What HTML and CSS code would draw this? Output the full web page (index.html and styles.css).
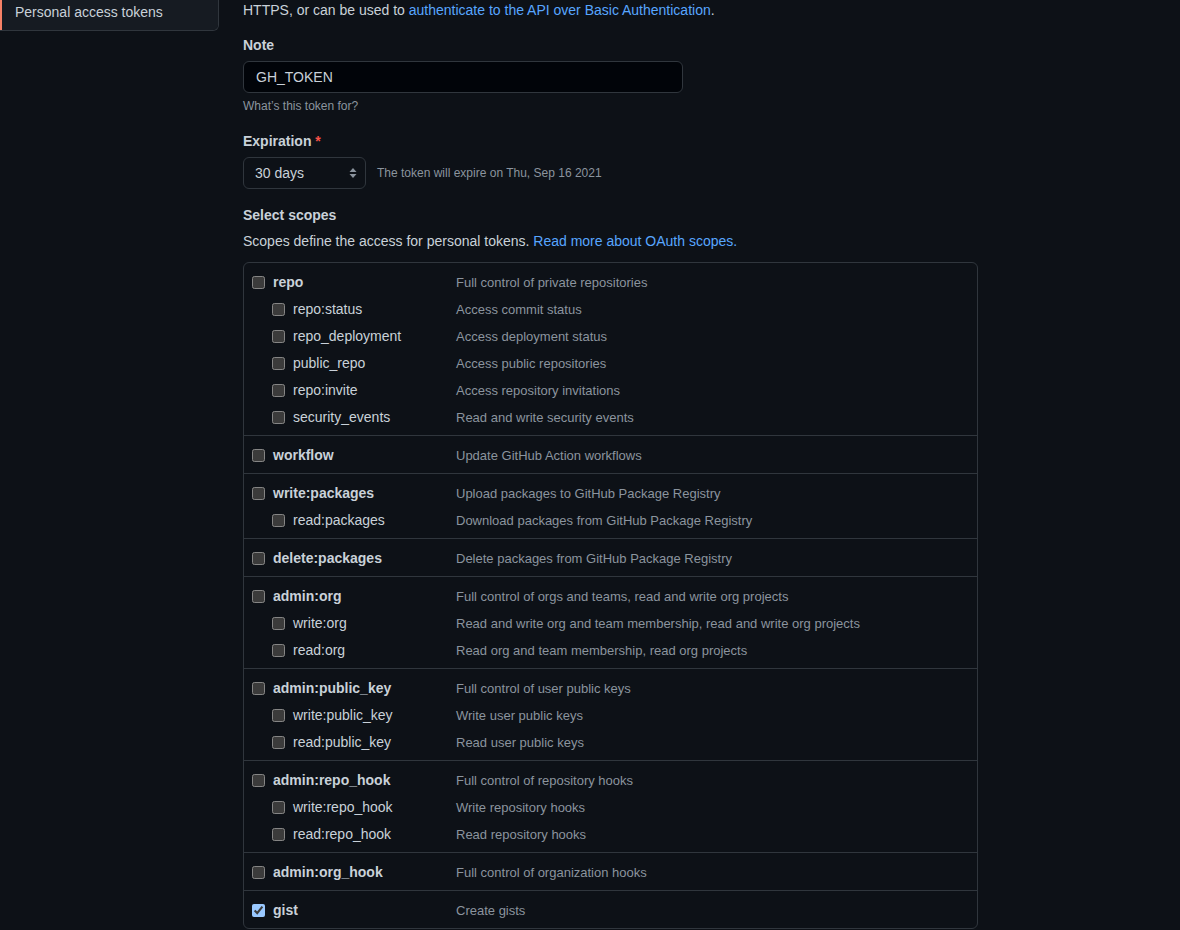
FILE: index.html
```html
<!DOCTYPE html>
<html lang="en">
<head>
    <meta charset="UTF-8">
    <meta name="viewport" content="width=device-width, initial-scale=1.0">
    <title>New personal access token</title>
    <link rel="stylesheet" href="styles.css">
</head>
<body>

    <div class="layout">
        <div class="sidebar">
            <nav class="side-nav">
                <a class="side-nav-item selected" href="#">Personal access tokens</a>
            </nav>
        </div>

        <div class="main">
            <p class="intro">
                HTTPS, or can be used to <a href="#">authenticate to the API over Basic Authentication</a>.
            </p>

            <div class="form-group">
                <label class="form-label" for="note">Note</label>
                <input class="form-input" id="note" type="text" value="GH_TOKEN">
                <p class="note">What’s this token for?</p>
            </div>

            <div class="form-group">
                <label class="form-label" for="expiration">Expiration <span class="required">*</span></label>
                <div class="expiration-row">
                    <div class="select-wrap">
                        <select class="form-select" id="expiration">
                            <option>30 days</option>
                            <option>60 days</option>
                            <option>90 days</option>
                            <option>Custom...</option>
                            <option>No expiration</option>
                        </select>
                        <svg class="select-arrows" width="8" height="12" viewBox="0 0 8 12">
                            <path d="M4 1 L7.5 5 H0.5 Z M4 11 L7.5 7 H0.5 Z" fill="#8b949e"/>
                        </svg>
                    </div>
                    <span class="expiration-text">The token will expire on Thu, Sep 16 2021</span>
                </div>
            </div>

            <div class="form-group">
                <div class="form-label">Select scopes</div>
                <p class="scopes-intro">Scopes define the access for personal tokens. <a href="#">Read more about OAuth scopes.</a></p>

                <div class="scopes">
                    <div class="scope-group">
                        <div class="scope-row parent">
                            <label class="scope-name"><input type="checkbox"> repo</label>
                            <span class="scope-desc">Full control of private repositories</span>
                        </div>
                        <div class="scope-row child">
                            <label class="scope-name"><input type="checkbox"> repo:status</label>
                            <span class="scope-desc">Access commit status</span>
                        </div>
                        <div class="scope-row child">
                            <label class="scope-name"><input type="checkbox"> repo_deployment</label>
                            <span class="scope-desc">Access deployment status</span>
                        </div>
                        <div class="scope-row child">
                            <label class="scope-name"><input type="checkbox"> public_repo</label>
                            <span class="scope-desc">Access public repositories</span>
                        </div>
                        <div class="scope-row child">
                            <label class="scope-name"><input type="checkbox"> repo:invite</label>
                            <span class="scope-desc">Access repository invitations</span>
                        </div>
                        <div class="scope-row child">
                            <label class="scope-name"><input type="checkbox"> security_events</label>
                            <span class="scope-desc">Read and write security events</span>
                        </div>
                    </div>

                    <div class="scope-group">
                        <div class="scope-row parent">
                            <label class="scope-name"><input type="checkbox"> workflow</label>
                            <span class="scope-desc">Update GitHub Action workflows</span>
                        </div>
                    </div>

                    <div class="scope-group">
                        <div class="scope-row parent">
                            <label class="scope-name"><input type="checkbox"> write:packages</label>
                            <span class="scope-desc">Upload packages to GitHub Package Registry</span>
                        </div>
                        <div class="scope-row child">
                            <label class="scope-name"><input type="checkbox"> read:packages</label>
                            <span class="scope-desc">Download packages from GitHub Package Registry</span>
                        </div>
                    </div>

                    <div class="scope-group">
                        <div class="scope-row parent">
                            <label class="scope-name"><input type="checkbox"> delete:packages</label>
                            <span class="scope-desc">Delete packages from GitHub Package Registry</span>
                        </div>
                    </div>

                    <div class="scope-group">
                        <div class="scope-row parent">
                            <label class="scope-name"><input type="checkbox"> admin:org</label>
                            <span class="scope-desc">Full control of orgs and teams, read and write org projects</span>
                        </div>
                        <div class="scope-row child">
                            <label class="scope-name"><input type="checkbox"> write:org</label>
                            <span class="scope-desc">Read and write org and team membership, read and write org projects</span>
                        </div>
                        <div class="scope-row child">
                            <label class="scope-name"><input type="checkbox"> read:org</label>
                            <span class="scope-desc">Read org and team membership, read org projects</span>
                        </div>
                    </div>

                    <div class="scope-group">
                        <div class="scope-row parent">
                            <label class="scope-name"><input type="checkbox"> admin:public_key</label>
                            <span class="scope-desc">Full control of user public keys</span>
                        </div>
                        <div class="scope-row child">
                            <label class="scope-name"><input type="checkbox"> write:public_key</label>
                            <span class="scope-desc">Write user public keys</span>
                        </div>
                        <div class="scope-row child">
                            <label class="scope-name"><input type="checkbox"> read:public_key</label>
                            <span class="scope-desc">Read user public keys</span>
                        </div>
                    </div>

                    <div class="scope-group">
                        <div class="scope-row parent">
                            <label class="scope-name"><input type="checkbox"> admin:repo_hook</label>
                            <span class="scope-desc">Full control of repository hooks</span>
                        </div>
                        <div class="scope-row child">
                            <label class="scope-name"><input type="checkbox"> write:repo_hook</label>
                            <span class="scope-desc">Write repository hooks</span>
                        </div>
                        <div class="scope-row child">
                            <label class="scope-name"><input type="checkbox"> read:repo_hook</label>
                            <span class="scope-desc">Read repository hooks</span>
                        </div>
                    </div>

                    <div class="scope-group">
                        <div class="scope-row parent">
                            <label class="scope-name"><input type="checkbox"> admin:org_hook</label>
                            <span class="scope-desc">Full control of organization hooks</span>
                        </div>
                    </div>

                    <div class="scope-group">
                        <div class="scope-row parent">
                            <label class="scope-name"><input type="checkbox" checked> gist</label>
                            <span class="scope-desc">Create gists</span>
                        </div>
                    </div>
                </div>
            </div>
        </div>
    </div>

</body>
</html>
```

FILE: styles.css
```css
html {
    color-scheme: dark;
}
body {
    margin: 0;
    background-color: #0d1117;
    color: #c9d1d9;
    font-family: 'Segoe UI', 'Liberation Sans', Arial, sans-serif;
    font-size: 14px;
    line-height: 1.5;
}
a {
    color: #58a6ff;
    text-decoration: none;
}
.layout {
    display: flex;
    align-items: flex-start;
}
.sidebar {
    width: 219px;
    flex-shrink: 0;
}
.side-nav {
    border: 1px solid #30363d;
    border-top: none;
    border-left: none;
    border-radius: 0 0 6px 0;
    overflow: hidden;
}
.side-nav-item {
    display: block;
    height: 30px;
    line-height: 24px;
    padding: 0 13px;
    color: #c9d1d9;
    background-color: #161b22;
    border-left: 2px solid #f78166;
}
.main {
    margin-left: 24px;
    width: 735px;
}
.intro {
    margin: 0;
}
.form-group {
    margin-top: 15px;
}
.intro + .form-group {
    margin-top: 13px;
}
.form-label {
    display: block;
    font-weight: 600;
    padding-top: 1px;
    margin-bottom: 5px;
}
.required {
    color: #f85149;
}
.form-input {
    display: block;
    box-sizing: border-box;
    width: 440px;
    height: 32px;
    padding: 5px 12px;
    font: inherit;
    color: #c9d1d9;
    background-color: #010409;
    border: 1px solid #30363d;
    border-radius: 6px;
    outline: none;
}
.note {
    margin: 4px 0 0;
    font-size: 12px;
    color: #8b949e;
}
.expiration-row {
    display: flex;
    align-items: center;
}
.select-wrap {
    position: relative;
}
.form-select {
    display: block;
    box-sizing: border-box;
    width: 123px;
    height: 32px;
    padding: 5px 24px 5px 11px;
    font: inherit;
    color: #c9d1d9;
    background-color: #0d1117;
    border: 1px solid #30363d;
    border-radius: 6px;
    appearance: none;
    -webkit-appearance: none;
    outline: none;
}
.select-arrows {
    position: absolute;
    right: 9px;
    top: 10px;
    pointer-events: none;
}
.expiration-text {
    margin-left: 11px;
    font-size: 12px;
    color: #8b949e;
}
.scopes-intro {
    margin: 2px 0 0;
}
.scopes {
    margin-top: 10px;
    border: 1px solid #30363d;
    border-radius: 6px;
}
.scope-group {
    padding: 6px 8px 4px;
}
.scope-group + .scope-group {
    border-top: 1px solid #30363d;
}
.scope-row {
    display: flex;
    align-items: center;
    height: 27px;
}
.scope-name {
    display: flex;
    align-items: center;
    box-sizing: border-box;
    width: 204px;
    flex-shrink: 0;
}
.scope-row.parent .scope-name {
    font-weight: 600;
}
.scope-row.child .scope-name {
    padding-left: 20px;
}
.scope-name input {
    width: 13px;
    height: 13px;
    margin: -1px 8px 0 0;
}
.scope-desc {
    font-size: 13px;
    color: #8b949e;
}
```
